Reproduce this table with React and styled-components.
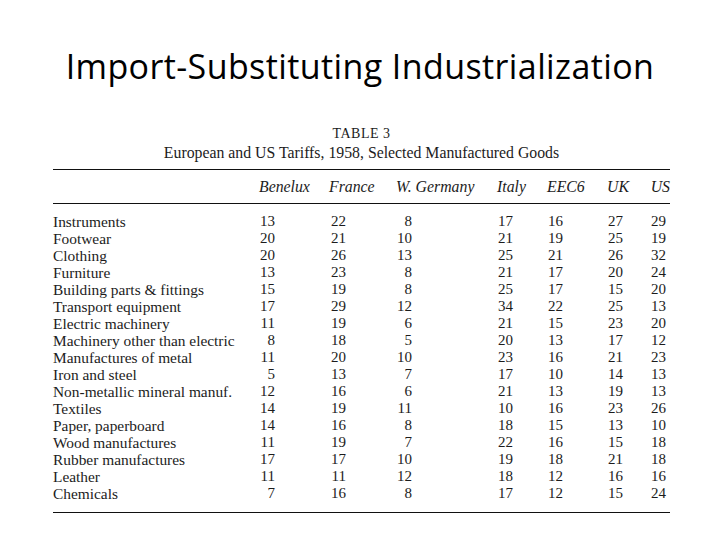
import React from "react";
import styled, { createGlobalStyle } from "styled-components";

const GlobalStyle = createGlobalStyle`
  html, body {
    margin: 0;
    padding: 0;
    background: #fff;
  }
`;

const Slide = styled.div`
  width: 720px;
  height: 540px;
  overflow: hidden;
  background: #fff;
  display: flex;
  flex-direction: column;
`;

const Title = styled.h1`
  margin: 0;
  padding-top: 46px;
  font-family: "Open Sans", "Lato", sans-serif;
  font-weight: 400;
  font-size: 34px;
  line-height: 40px;
  font-variant-ligatures: none;
  letter-spacing: 0.4px;
  text-align: center;
  color: #000;
`;

const TableWrap = styled.div`
  margin: 38px 0 0 53px;
  width: 617px;
  font-family: "Liberation Serif", "Times New Roman", serif;
  color: #1c1c1c;
`;

const Caption = styled.div`
  text-align: center;
  font-size: ${(p) => p.size}px;
  line-height: 19px;
  letter-spacing: ${(p) => (p.caps ? "0.5px" : "0")};
`;

const Rule = styled.div`
  height: 0;
  border-top: 1.5px solid #111;
  margin-top: ${(p) => p.mt || 0}px;
`;

const cols = [
  { w: 206, pad: 0 },
  { w: 70, pad: 54 },
  { w: 67, pad: 50 },
  { w: 101, pad: 85 },
  { w: 50, pad: 34 },
  { w: 60, pad: 44 },
  { w: 43, pad: 27 },
  { w: 20, pad: 4 },
];

const Grid = styled.div`
  display: grid;
  grid-template-columns: ${cols.map((c) => c.w + "px").join(" ")};
  font-size: 15px;
  line-height: 17px;
  padding: ${(p) => p.pt}px 0 ${(p) => p.pb}px;
`;

const Head = styled.div`
  font-style: italic;
  font-size: 15.8px;
  white-space: nowrap;
  text-align: ${(p) => (p.last ? "right" : "left")};
`;

const Label = styled.div`
  white-space: nowrap;
  font-size: 15.4px;
`;

const Num = styled.div`
  text-align: right;
  padding-right: ${(p) => p.pad}px;
`;

const headers = ["Benelux", "France", "W. Germany", "Italy", "EEC6", "UK", "US"];

const rows = [
  ["Instruments", 13, 22, 8, 17, 16, 27, 29],
  ["Footwear", 20, 21, 10, 21, 19, 25, 19],
  ["Clothing", 20, 26, 13, 25, 21, 26, 32],
  ["Furniture", 13, 23, 8, 21, 17, 20, 24],
  ["Building parts & fittings", 15, 19, 8, 25, 17, 15, 20],
  ["Transport equipment", 17, 29, 12, 34, 22, 25, 13],
  ["Electric machinery", 11, 19, 6, 21, 15, 23, 20],
  ["Machinery other than electric", 8, 18, 5, 20, 13, 17, 12],
  ["Manufactures of metal", 11, 20, 10, 23, 16, 21, 23],
  ["Iron and steel", 5, 13, 7, 17, 10, 14, 13],
  ["Non-metallic mineral manuf.", 12, 16, 6, 21, 13, 19, 13],
  ["Textiles", 14, 19, 11, 10, 16, 23, 26],
  ["Paper, paperboard", 14, 16, 8, 18, 15, 13, 10],
  ["Wood manufactures", 11, 19, 7, 22, 16, 15, 18],
  ["Rubber manufactures", 17, 17, 10, 19, 18, 21, 18],
  ["Leather", 11, 11, 12, 18, 12, 16, 16],
  ["Chemicals", 7, 16, 8, 17, 12, 15, 24],
];

export default function App() {
  return (
    <>
      <GlobalStyle />
      <Slide>
        <Title>Import-Substituting Industrialization</Title>
        <TableWrap>
          <Caption size={14} caps>TABLE 3</Caption>
          <Caption size={15.8}>European and US Tariffs, 1958, Selected Manufactured Goods</Caption>
          <Rule mt={7} />
          <Grid pt={8} pb={8}>
            <div />
            {headers.map((h, i) => (
              <Head key={h} last={i === headers.length - 1}>{h}</Head>
            ))}
          </Grid>
          <Rule />
          <Grid pt={9} pb={9}>
            {rows.map((r) => (
              <React.Fragment key={r[0]}>
                <Label>{r[0]}</Label>
                {r.slice(1).map((v, i) => (
                  <Num key={i} pad={cols[i + 1].pad}>{v}</Num>
                ))}
              </React.Fragment>
            ))}
          </Grid>
          <Rule mt={1} />
        </TableWrap>
      </Slide>
    </>
  );
}
